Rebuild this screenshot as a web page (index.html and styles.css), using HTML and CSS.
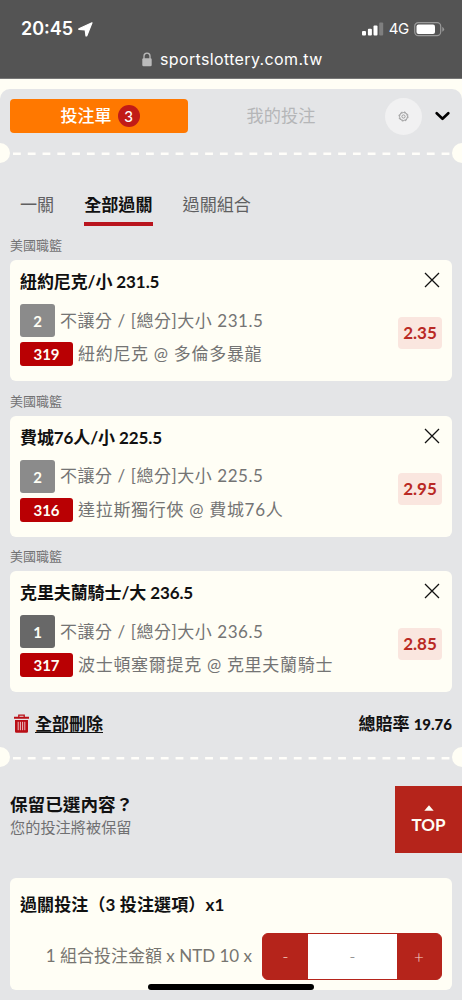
FILE: index.html
```
<!DOCTYPE html>
<html lang="zh-Hant">
<head>
<meta charset="utf-8">
<meta name="viewport" content="width=device-width, initial-scale=1">
<title>投注單</title>
<link rel="stylesheet" href="styles.css">
</head>
<body>
<div class="screen">
  <header class="browser">
    <div class="status">
      <span class="clock">20:45</span>
      <svg class="arrow" width="15" height="15" viewBox="0 0 15 15"><path d="M14 .8 8.8 13.9 8 14 7.2 7.9.8 7.4.9 6.7Z" fill="#fff" stroke="#fff" stroke-width="1.2" stroke-linejoin="round"/></svg>
      <svg class="signal" width="22" height="14" viewBox="0 0 22 14"><g fill="#fff"><rect x="0" y="8.9" width="4" height="4.6" rx="1"/><rect x="5.9" y="6.7" width="4" height="6.8" rx="1"/><rect x="11.5" y="3.4" width="4" height="10.1" rx="1"/><rect x="17.2" y=".6" width="4" height="12.9" rx="1" opacity=".25"/></g></svg>
      <span class="network">4G</span>
      <svg class="battery" width="31" height="15" viewBox="0 0 31 15"><rect x=".7" y=".7" width="26" height="13" rx="3.6" fill="none" stroke="#999" stroke-width="1.2"/><rect x="2.5" y="2.5" width="18.5" height="9.4" rx="2" fill="#fff"/><path d="M28.3 4.8q1.8 1 1.8 2.5t-1.8 2.5z" fill="#999"/></svg>
    </div>
    <div class="address">
      <svg width="10" height="15" viewBox="0 0 10 15"><path d="M2 7V4.2a3 3 0 0 1 6 0V7" fill="none" stroke="#bbb" stroke-width="1.3"/><rect x=".3" y="6.3" width="9.4" height="8" rx="1.3" fill="#bbb"/></svg>
      <span>sportslottery.com.tw</span>
    </div>
  </header>

  <main class="slip">
    <nav class="top-tabs">
      <div class="tab-active"><span>投注單</span><b class="count">3</b></div>
      <div class="tab-idle">我的投注</div>
      <div class="gear"><svg width="11" height="11" viewBox="0 0 11 11" fill="none" stroke="#8d8d8d" stroke-width=".8"><circle cx="5.5" cy="5.5" r="4"/><circle cx="5.5" cy="5.5" r="4.6" stroke-width=".8" stroke-dasharray="1.8 1.81"/><circle cx="5.5" cy="5.5" r="1.6"/></svg></div>
      <svg class="chevron" width="15" height="10" viewBox="0 0 15 10"><path d="M1.7 2.2 7.5 7.8 13.3 2.2" fill="none" stroke="#000" stroke-width="2.6" stroke-linecap="round" stroke-linejoin="round"/></svg>
    </nav>
    <div class="perforation"><svg width="462" height="20"><circle cx="0" cy="10" r="10" fill="#fffef5"/><circle cx="462" cy="10" r="10" fill="#fffef5"/><path d="M13 10.8H450" stroke="#fffefa" stroke-width="2.6" stroke-dasharray="7.8 6.98"/></svg></div>
    <nav class="modes"><span>一關</span><span class="selected">全部過關</span><span>過關組合</span></nav>

    <section class="bet">
      <h3>美國職籃</h3>
      <article class="card">
        <div class="info">
          <h2>紐約尼克/小 231.5</h2>
          <p class="market"><b class="badge">2</b><span>不讓分 / [總分]大小 231.5</span></p>
          <p class="match"><b class="code">319</b><span>紐約尼克 @ 多倫多暴龍</span></p>
        </div>
        <div class="side"><svg width="16" height="16" viewBox="0 0 16 16"><path d="M1 1 15 15M15 1 1 15" stroke="#111" stroke-width="1.3"/></svg><b class="odds">2.35</b></div>
      </article>
    </section>
    <section class="bet">
      <h3>美國職籃</h3>
      <article class="card">
        <div class="info">
          <h2>費城76人/小 225.5</h2>
          <p class="market"><b class="badge">2</b><span>不讓分 / [總分]大小 225.5</span></p>
          <p class="match"><b class="code">316</b><span>達拉斯獨行俠 @ 費城76人</span></p>
        </div>
        <div class="side"><svg width="16" height="16" viewBox="0 0 16 16"><path d="M1 1 15 15M15 1 1 15" stroke="#111" stroke-width="1.3"/></svg><b class="odds">2.95</b></div>
      </article>
    </section>
    <section class="bet">
      <h3>美國職籃</h3>
      <article class="card">
        <div class="info">
          <h2>克里夫蘭騎士/大 236.5</h2>
          <p class="market"><b class="badge dark">1</b><span>不讓分 / [總分]大小 236.5</span></p>
          <p class="match"><b class="code">317</b><span>波士頓塞爾提克 @ 克里夫蘭騎士</span></p>
        </div>
        <div class="side"><svg width="16" height="16" viewBox="0 0 16 16"><path d="M1 1 15 15M15 1 1 15" stroke="#111" stroke-width="1.3"/></svg><b class="odds">2.85</b></div>
      </article>
    </section>

    <div class="summary">
      <svg width="15" height="19" viewBox="0 0 15 19"><path d="M4.8 3V1.2h5.4V3" fill="none" stroke="#b90e16" stroke-width="1.3"/><path d="M0 2.8h15v2H0zM1 6h13v11.4q0 1.3-1.3 1.3H2.3Q1 18.7 1 17.4z" fill="#b90e16"/><path d="M4.2 7.8v8.4M6.4 7.8v8.4M8.6 7.8v8.4M10.8 7.8v8.4" stroke="#f0d5d6" stroke-width=".9"/></svg>
      <a>全部刪除</a><span class="total">總賠率 <b>19.76</b></span>
    </div>
    <div class="perforation"><svg width="462" height="20"><circle cx="0" cy="10" r="10" fill="#fffef5"/><circle cx="462" cy="10" r="10" fill="#fffef5"/><path d="M13 11.2H450" stroke="#fffefa" stroke-width="2.6" stroke-dasharray="7.8 6.98"/></svg></div>

    <section class="keep">
      <div class="keep-text"><h2>保留已選內容？</h2><p>您的投注將被保留</p></div>
      <div class="to-top"><svg width="10" height="6" viewBox="0 0 10 6"><path d="M5 .3 9.7 5.7H.3z" fill="#fffef5"/></svg><span>TOP</span></div>
    </section>

    <section class="stake">
      <h2>過關投注（3 投注選項）x1</h2>
      <div class="stake-row">
        <span class="stake-label">1 組合投注金額 x NTD 10 x</span>
        <div class="stepper"><span>-</span><span class="value">-</span><span>+</span></div>
      </div>
    </section>
  </main>
  <div class="home-bar"></div>
</div>
</body>
</html>
```
FILE: styles.css
```
* { box-sizing: border-box; }
body, h2, h3, p { margin: 0; }
body { background: #fffef5; }
.screen {
  position: relative; width: 462px; height: 1000px; overflow: hidden;
  background: #fffef5; color: #111;
  font: 17px/24px Lato, "Noto Sans CJK TC", sans-serif;
}
.screen span, .screen h2, .screen h3, .screen p, .screen a { white-space: nowrap; }

.browser { height: 79px; padding-top: 16px; background: #545454; color: #fff; font-family: Inter, sans-serif; border-bottom: 1px solid #777; }
.status { display: flex; align-items: center; height: 26px; padding: 0 17px 0 21px; }
.clock { font-size: 18px; font-weight: 600; }
.arrow { margin-left: 5px; }
.signal { margin-left: auto; }
.network { margin: 0 5px 0 5px; font-size: 15px; letter-spacing: -.3px; }
.address { display: flex; align-items: center; gap: 8px; margin-left: 142px; height: 34px; font-size: 16px; letter-spacing: .36px; }

.slip { height: 921px; margin-top: 10px; background: #e4e5e7; border-radius: 10px 10px 0 0; }
.top-tabs { display: flex; align-items: center; height: 54px; padding: 0 12px 0 10px; }
.tab-active { display: flex; align-items: center; justify-content: center; gap: 6px; width: 178px; height: 34px; padding-left: 2px; border-radius: 4px; background: #ff7800; color: #fff; font-weight: 500; }
.count { width: 22px; height: 22px; border-radius: 50%; background: #c11b17; font: 500 15px/22px Lato, sans-serif; text-align: center; }
.tab-idle { width: 186px; color: #b5b6b8; text-align: center; font-size: 17.2px; }
.gear { display: flex; align-items: center; justify-content: center; width: 37px; height: 37px; margin-left: 11px; border-radius: 50%; background: #f1f1f2; }
.chevron { margin-left: auto; }
.perforation { height: 20px; }
.perforation svg { display: block; }

.modes { display: flex; gap: 30px; height: 62px; padding: 27px 0 0 20px; font-size: 17.1px; color: #5f5f61; }
.modes span { height: 36px; line-height: 29px; }
.modes .selected { color: #111; font-weight: 700; border-bottom: 4px solid #b9141e; }

.bet { height: 155.5px; }
.bet h3 { height: 35px; padding: 10px 0 0 10px; font-weight: 400; font-size: 13px; line-height: 20px; color: #727274; }
.card { display: flex; justify-content: space-between; height: 121px; margin: 0 10px; padding: 10px; border-radius: 6px; background: #fffef5; }
.card h2 { height: 34px; font-size: 17px; line-height: 24px; font-weight: 700; letter-spacing: -.1px; }
.card p { display: flex; align-items: center; gap: 5px; color: #747474; }
.market { height: 33px; letter-spacing: .55px; }
.match { height: 34px; letter-spacing: .7px; }
.badge, .code { background: #8b8b8b; color: #fffef5; font-size: 15px; letter-spacing: 0; text-align: center; border-radius: 3px; }
.badge { width: 35px; height: 33px; line-height: 34px; }
.badge.dark { background: #686868; }
.code { width: 53px; height: 24px; line-height: 24px; background: #b90003; }
.side { display: flex; flex-direction: column; align-items: flex-end; justify-content: space-between; padding: 2px 0 22px; }
.side svg { margin-right: 2px; }
.odds { width: 44px; height: 32px; border-radius: 4px; background: #fae6df; color: #b92924; line-height: 32px; text-align: center; }

.summary { display: flex; align-items: center; height: 46px; margin-top: 9px; padding: 0 10px 0 14px; font-weight: 700; }
.summary a { margin-left: 6px; text-decoration: underline; text-decoration-thickness: 1px; text-underline-offset: 2px; }
.total { margin-left: auto; font-size: 17px; }
.total b { font-size: 15px; }

.keep { display: flex; justify-content: space-between; height: 111px; padding-top: 19px; }
.keep-text { padding: 6px 0 0 10px; }
.keep h2 { font-size: 17.6px; line-height: 25px; font-weight: 700; }
.keep p { font-size: 15.2px; line-height: 21px; color: #707072; }
.to-top { display: flex; flex-direction: column; align-items: center; width: 67px; height: 67px; padding-top: 19px; background: #b5241b; color: #fffef5; font-size: 17px; }
.to-top span { margin-top: 2px; font-weight: 700; }

.stake { height: 112px; margin: 0 10px; padding: 14px 10px 0; border-radius: 6px; background: #fffef5; }
.stake h2 { height: 41px; font-size: 17px; line-height: 25px; font-weight: 700; letter-spacing: .12px; }
.stake-row { display: flex; align-items: center; justify-content: flex-end; gap: 10px; color: #777570; }
.stepper { display: grid; grid-template-columns: 45px 89px 44px; width: 180px; height: 47px; border: 1px solid #b5241b; border-radius: 6px; background: #b5241b; color: #f8d6c8; text-align: center; line-height: 45px; font-weight: 300; }
.value { background: #fff; color: #777; }
.home-bar { position: absolute; left: 148px; top: 984px; width: 166px; height: 6px; border-radius: 3px; background: #000; }
```
